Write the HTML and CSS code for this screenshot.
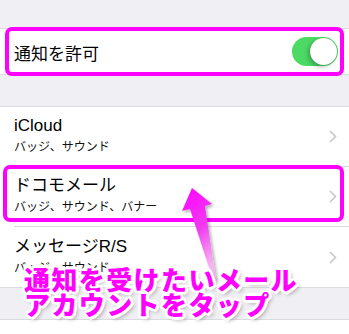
FILE: index.html
```html
<!DOCTYPE html>
<html lang="ja">
<head>
<meta charset="utf-8">
<link rel="stylesheet" href="styles.css">
</head>
<body>
<div class="screen">
  <div class="gap gap-top"></div>
  <div class="group">
    <div class="row row-switch">
      <div class="row-inner last">
        <span class="title">通知を許可</span>
        <span class="switch"><span class="knob"></span></span>
      </div>
    </div>
  </div>
  <div class="gap gap-mid"></div>
  <div class="group">
    <div class="row row-app">
      <div class="row-inner">
        <div class="texts">
          <div class="title">iCloud</div>
          <div class="sub">バッジ、サウンド</div>
        </div>
        <svg class="chev" width="8" height="13" viewBox="0 0 8 13"><path d="M1 1 L6.5 6.5 L1 12" fill="none" stroke="#c7c7cc" stroke-width="1.6"/></svg>
      </div>
    </div>
    <div class="row row-app">
      <div class="row-inner">
        <div class="texts">
          <div class="title">ドコモメール</div>
          <div class="sub">バッジ、サウンド、バナー</div>
        </div>
        <svg class="chev" width="8" height="13" viewBox="0 0 8 13"><path d="M1 1 L6.5 6.5 L1 12" fill="none" stroke="#c7c7cc" stroke-width="1.6"/></svg>
      </div>
    </div>
    <div class="row row-app">
      <div class="row-inner last">
        <div class="texts">
          <div class="title">メッセージR/S</div>
          <div class="sub">バッジ、サウンド</div>
        </div>
        <svg class="chev" width="8" height="13" viewBox="0 0 8 13"><path d="M1 1 L6.5 6.5 L1 12" fill="none" stroke="#c7c7cc" stroke-width="1.6"/></svg>
      </div>
    </div>
  </div>
  <div class="gap gap-bottom"></div>
  <div class="group group-end"></div>

  <div class="hl hl-1"></div>
  <div class="hl hl-2"></div>

  <svg class="arrow" width="60" height="110" viewBox="170 180 60 110">
    <defs>
      <linearGradient id="ag" x1="0" y1="0" x2="0.3" y2="1">
        <stop offset="0" stop-color="#ff00ff"/>
        <stop offset="0.55" stop-color="#f03cf0"/>
        <stop offset="1" stop-color="#f6b4f2"/>
      </linearGradient>
      <filter id="sh" x="-50%" y="-20%" width="200%" height="140%">
        <feDropShadow dx="2" dy="2" stdDeviation="1.5" flood-color="#000" flood-opacity="0.3"/>
      </filter>
    </defs>
    <polygon points="192,188 212,204 205,206 216,280 213,280 190,209 182,211" fill="url(#ag)" filter="url(#sh)"/>
  </svg>

  <div class="callout">通知を受けたいメール<br>アカウントをタップ</div>
</div>
</body>
</html>
```
FILE: styles.css
```css
html, body {
  margin: 0;
  padding: 0;
}
body {
  background: #efeff4;
  font-family: "Liberation Sans", "Noto Sans CJK JP", sans-serif;
  color: #000;
}
.screen {
  position: relative;
  width: 349px;
  height: 334px;
  overflow: hidden;
  background: #efeff4;
}
.gap-top { height: 28px; }
.gap-mid { height: 31px; }
.gap-bottom { height: 31px; }
.group {
  background: #fff;
  border-top: 1px solid #dcdce0;
  border-bottom: 1px solid #dcdce0;
}
.group-end {
  height: 40px;
  border-bottom: none;
}
.row {
  padding-left: 14px;
}
.row-inner {
  display: flex;
  align-items: center;
  justify-content: space-between;
  border-bottom: 1px solid #dcdce0;
  box-sizing: border-box;
}
.row-inner.last {
  border-bottom: none;
}
.row-switch .row-inner {
  height: 45px;
  padding-right: 11px;
}
.row-switch .title {
  font-size: 17px;
  padding-top: 1px;
}
.switch {
  position: relative;
  display: block;
  width: 46px;
  height: 29px;
  border-radius: 15px;
  background: #4cd964;
}
.knob {
  position: absolute;
  right: 1px;
  top: 1px;
  width: 27px;
  height: 27px;
  border-radius: 50%;
  background: #fff;
  box-shadow: -2px 2px 4px rgba(0,0,0,0.25), 0 0 0 0.5px rgba(0,0,0,0.08);
}
.row-app .row-inner {
  height: 60px;
  padding-right: 12px;
}
.texts {
  display: flex;
  flex-direction: column;
  gap: 4px;
  margin-top: -3px;
}
.row-app .title {
  font-size: 17px;
  line-height: 21px;
}
.sub {
  font-size: 12px;
  line-height: 15px;
  color: #111;
}
.chev {
  display: block;
}
.hl {
  position: absolute;
  border: 4px solid #ff00ff;
  border-radius: 7px;
  box-sizing: border-box;
}
.hl-1 {
  left: 5px;
  top: 27px;
  width: 339px;
  height: 49px;
}
.hl-2 {
  left: 3px;
  top: 165px;
  width: 341px;
  height: 57px;
}
.arrow {
  position: absolute;
  left: 170px;
  top: 180px;
}
.callout {
  position: absolute;
  left: 24px;
  top: 266px;
  font-family: "Noto Sans CJK JP", sans-serif;
  font-weight: 900;
  font-size: 26px;
  line-height: 25px;
  color: #ff00ff;
  letter-spacing: 1.4px;
  white-space: nowrap;
  text-shadow:
    2px 0 0 #fff, -2px 0 0 #fff, 0 2px 0 #fff, 0 -2px 0 #fff,
    2px 2px 0 #fff, -2px 2px 0 #fff, 2px -2px 0 #fff, -2px -2px 0 #fff,
    3px 1px 0 #fff, -3px 1px 0 #fff, 1px 3px 0 #fff, 1px -3px 0 #fff,
    3px 3px 4px rgba(0,0,0,0.35);
}
```
